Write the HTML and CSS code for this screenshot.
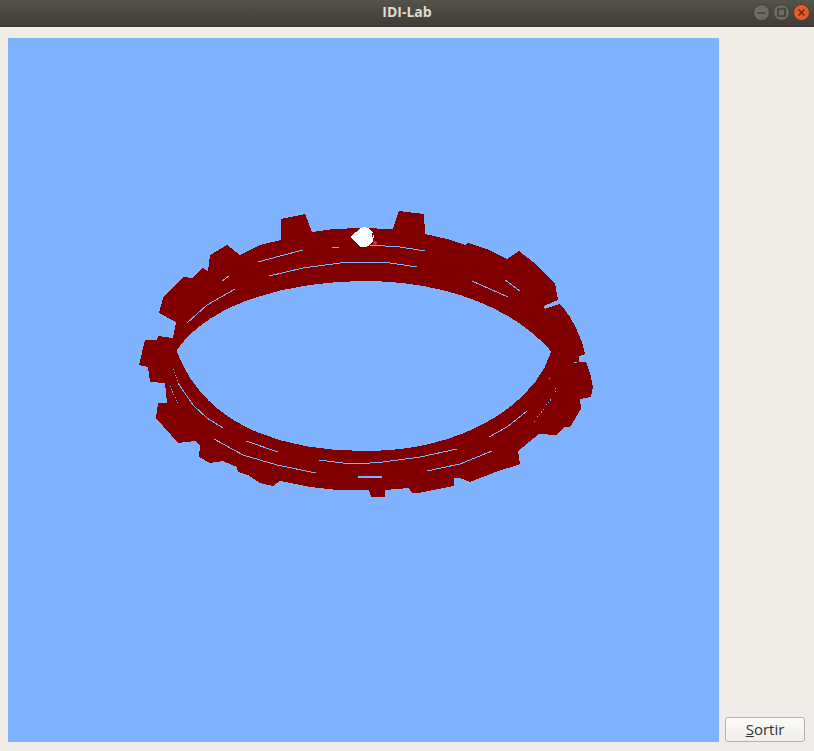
FILE: index.html
```html
<!DOCTYPE html>
<html lang="ca">
<head>
<meta charset="utf-8">
<title>IDI-Lab</title>
<link rel="stylesheet" href="styles.css">
</head>
<body>
<div class="window">
  <header class="titlebar">
    <span></span>
    <span class="title">IDI-Lab</span>
    <div class="controls">
      <svg class="ctl" viewBox="0 0 17 17"><circle class="ctl-bg" cx="8.5" cy="8.5" r="8"/><path class="ctl-mark" d="M4.5 9h8"/></svg>
      <svg class="ctl" viewBox="0 0 17 17"><circle class="ctl-bg" cx="8.5" cy="8.5" r="8"/><rect class="ctl-mark" x="5" y="5" width="7" height="7"/></svg>
      <svg class="ctl" viewBox="0 0 17 17"><circle class="ctl-close" cx="8.5" cy="8.5" r="8"/><path class="ctl-x" d="M5.5 5.5l6 6M11.5 5.5l-6 6"/></svg>
    </div>
  </header>
  <main class="content">
    <svg class="viewport" viewBox="8 38 711 704" width="711" height="704">
      <path class="ring" fill-rule="evenodd" d="M139 365L145 340L157 340L158 336L173 338L176 322L159 313L163 298L183 277L192 278L203 268L208 271L210 255L227 245L240 255L260 245L281 240L281 219L305 214L312 232L333 229L360 228L393 229L399 211L424 214L425 234L447 239L465 245L468 243L487 249L507 259L519 251L533 262L543 272L555 283L558 300L544 306L545 309L559 304L565 310L570 317L576 328L582 342L585 354L579 356L579 362L568 363L586 362L590 373L593 387L591 397L580 399L581 409L570 427L564 427L557 435L539 434L518 451L520 464L493 473L470 482L460 478L454 478L454 486L418 493L412 493L409 488L385 490L385 497L371 497L369 490L338 490L310 487L280 481L273 486L260 483L248 475L238 472L237 467L223 461L210 463L199 457L200 445L195 441L178 443L156 418L158 403L167 403L165 383L150 382L148 367Z
      M177 350C213 298 300 281 365 281C440 281 510 305 550 350L551 352C535 405 460 452 365 451C280 451 205 425 177 352Z"/>
      <g class="slits">
        <polyline points="258,262 280,256 303,250"/>
        <polyline points="269,276 303,268 340,263 370,262 390,263 417,267"/>
        <polyline points="332,247 339,247"/>
        <polyline points="370,245 400,247 425,251"/>
        <polyline points="222,281 229,276"/>
        <polyline points="187,323 207,305 235,289"/>
        <polyline class="slit-dots" points="173,369 178,383"/>
        <polyline points="178,383 193,405 207,418 223,428"/>
        <polyline class="slit-dots" points="170,386 178,404"/>
        <polyline points="214,439 243,455 277,465 316,473"/>
        <polyline points="246,441 278,452"/>
        <polyline points="319,460 343,463 370,463 383,462 420,457 457,449"/>
        <polyline points="427,471 460,464 492,451"/>
        <polyline points="489,437 507,427 527,411"/>
        <polyline class="slit-dots" points="534,422 552,398"/>
        <polyline class="slit-dots" points="555,392 556,387"/>
        <polyline class="slit-dots" points="549,379 551,378"/>
        <polyline points="472,281 508,297"/>
        <polyline points="505,280 520,291"/>
        <polyline class="slit-wide" points="358,477 382,477"/>
      </g>
      <circle class="pink" cx="375" cy="243" r="2"/>
      <path class="marble" d="M350 237L356 232L361 228L364 227L368 228L372 231L374 236L373 241L370 245L366 247L360 247L355 242Z"/>
      <rect class="eye" x="372" y="233" width="1" height="4"/>
    </svg>
    <aside class="side">
      <button class="exit" type="button"><u>S</u>ortir</button>
    </aside>
  </main>
</div>
</body>
</html>
```
FILE: styles.css
```css
* { box-sizing: border-box; }
html, body { margin: 0; height: 100%; }
body { background: #f0ede8; overflow: hidden; }
.window { display: flex; flex-direction: column; width: 814px; height: 751px; }
.titlebar {
  flex: 0 0 27px;
  display: grid;
  grid-template-columns: 1fr auto 1fr;
  align-items: start;
  background: linear-gradient(#57534b, #3d3b36);
}
.title {
  font: bold 14px/24px "Open Sans", sans-serif;
  color: #dfdbd2;
}
.controls { display: flex; justify-content: flex-end; gap: 3px; padding: 4px 4px 0 0; }
.ctl { width: 17px; height: 17px; display: block; }
.ctl-bg { fill: #6d6b64; stroke: #3f3d38; stroke-width: 1; }
.ctl-close { fill: #e95b2b; stroke: #4a3a2c; stroke-width: 1; }
.ctl-mark { fill: none; stroke: #34322e; stroke-width: 1.2; }
.ctl-x { fill: none; stroke: #5b2c16; stroke-width: 1.4; }
.content { flex: 1; display: flex; padding: 11px 9px 9px 8px; gap: 6px; }
.viewport { display: block; flex: 0 0 711px; background: #7fb2ff; }
.ring { fill: #800000; shape-rendering: crispEdges; }
.slits polyline { fill: none; stroke: #7fb2ff; stroke-width: 1; shape-rendering: crispEdges; }
.slits .slit-wide { stroke-width: 2; }
.slits .slit-dots { stroke-dasharray: 1 2; }
.marble { fill: #fff; shape-rendering: crispEdges; }
.pink { fill: #e0265f; }
.eye { fill: #222; }
.side { flex: 1; display: flex; flex-direction: column; justify-content: flex-end; }
.exit {
  width: 80px;
  height: 25px;
  padding: 0;
  border: 1px solid #b5b2ab;
  border-radius: 3px;
  background: linear-gradient(#fbfbfa, #f0eeea);
  color: #2f3338;
  font: 15px/1 "Open Sans", sans-serif;
}
```
